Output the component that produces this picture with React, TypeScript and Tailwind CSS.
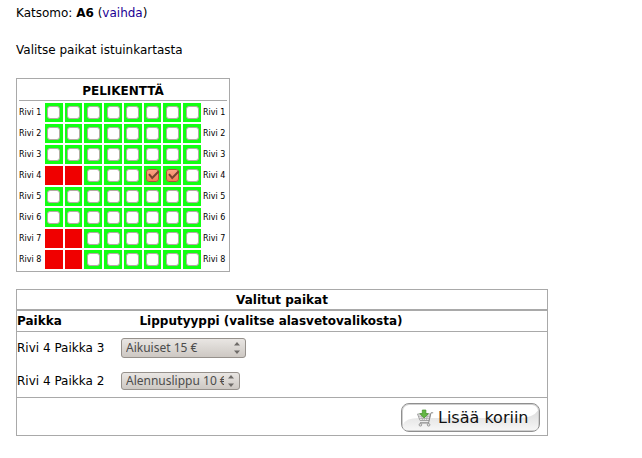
import { useState } from 'react'

type SeatState = 'free' | 'taken' | 'selected'

interface Pick {
  row: number
  seat: number
  ticket: string
  size: string
}

const COLS = [0, 1, 2, 3, 4, 5, 6, 7]

// . = free, x = taken, o = selected
const ROWS = ['........', '........', '........', 'xx...oo.', '........', '........', 'xx......', 'xx......']

const PICKS: Pick[] = [
  { row: 4, seat: 3, ticket: 'Aikuiset 15 €', size: 'w-[125px] h-5' },
  { row: 4, seat: 2, ticket: 'Alennuslippu 10 €', size: 'w-[119px] h-[18px]' },
]

const toState = (c: string): SeatState => (c === 'x' ? 'taken' : c === 'o' ? 'selected' : 'free')

function Seat({ state, label }: { state: SeatState; label: string }) {
  const [checked, setChecked] = useState(state === 'selected')

  if (state === 'taken') {
    return <td className="h-[19px] bg-[#f00000] p-0" />
  }

  return (
    <td className="h-[19px] bg-[#12ff12] p-0">
      <div className="relative mx-auto size-[13px]">
        <input
          type="checkbox"
          aria-label={label}
          checked={checked}
          onChange={(e) => setChecked(e.target.checked)}
          className="block size-[13px] appearance-none rounded-[3px] border border-[#b3aba4] bg-white checked:border-[#a8553a] checked:bg-linear-to-b checked:from-[#f9a284] checked:to-[#f07f58]"
        />
        {checked && (
          <svg viewBox="0 0 14 13" className="pointer-events-none absolute top-0 left-0 h-[13px] w-[14px]" fill="none">
            <path d="M3 5.2 L6.2 9 L12.8 2.2" stroke="#7a4030" strokeWidth="2" />
          </svg>
        )}
      </div>
    </td>
  )
}

function TicketSelect({ pick }: { pick: Pick }) {
  return (
    <div className="relative w-fit">
      <select
        aria-label={`Lipputyyppi, rivi ${pick.row} paikka ${pick.seat}`}
        defaultValue={pick.ticket}
        className={`${pick.size} block appearance-none rounded-[3px] border border-[#96918c] bg-linear-to-b from-[#e9e6e3] to-[#cdc8c3] pr-[15px] pl-1 font-['Noto_Sans',sans-serif] text-xs leading-4 text-[#4c4c4c]`}
      >
        <option>Aikuiset 15 €</option>
        <option>Alennuslippu 10 €</option>
      </select>
      <svg viewBox="0 0 6 12" className="pointer-events-none absolute inset-y-0 right-[6px] my-auto h-3 w-[6px]" fill="#6e6b68">
        <path d="M0 3.5 L3 0 L6 3.5 Z M0 8.5 L3 12 L6 8.5 Z" />
      </svg>
    </div>
  )
}

function CartIcon() {
  return (
    <svg viewBox="0 0 18 18" className="relative size-[18px]" fill="none">
      <path d="M1.5 5 H14.5 L13 11.5 H4 Z" fill="#ececec" stroke="#a3a3a3" />
      <path d="M2.5 7.2 H14 M3.2 9.4 H13.5 M5.5 5.5 L6.5 11.5 M8.3 5.5 V11.5 M11.3 5.5 L10.5 11.5" stroke="#a6a6a6" strokeWidth="0.8" />
      <path d="M12.6 13.8 L15 3.8 H17.2" stroke="#8c8c8c" />
      <path d="M4 13.8 H13" stroke="#8c8c8c" strokeWidth="1.2" />
      <circle cx="4.4" cy="15.8" r="1.3" fill="#ddd" stroke="#888" strokeWidth="0.8" />
      <circle cx="12.6" cy="15.8" r="1.3" fill="#ddd" stroke="#888" strokeWidth="0.8" />
      <path d="M6.3 1 H9.9 V4.6 H12.4 L8.1 9 L3.8 4.6 H6.3 Z" fill="#63b845" stroke="#43912a" strokeWidth="0.7" />
    </svg>
  )
}

export default function App() {
  return (
    <main className="bg-white px-4 pt-[5px] font-['DejaVu_Sans',sans-serif] text-xs text-black">
      <p className="leading-4">
        Katsomo: <b>A6</b> (<a href="#vaihda" className="text-[#1a0094]">vaihda</a>)
      </p>
      <p className="mt-[21px] leading-4">Valitse paikat istuinkartasta</p>

      {/* Seat map */}
      <table className="mt-5 w-[214px] table-fixed border-separate border-spacing-[2px] border border-[#a9a9a9]">
        <colgroup>
          <col className="w-6" />
          {COLS.map((c) => <col key={c} />)}
          <col className="w-6" />
        </colgroup>
        <thead>
          <tr>
            <th colSpan={10} className="h-5 border-b border-[#a9a9a9] p-0 leading-4">PELIKENTTÄ</th>
          </tr>
        </thead>
        <tbody>
          {ROWS.map((row, r) => (
            <tr key={r}>
              <th scope="row" className="p-0 text-left text-[8px] leading-3 font-normal whitespace-nowrap">Rivi {r + 1}</th>
              {COLS.map((c) => (
                <Seat key={c} state={toState(row[c])} label={`Rivi ${r + 1} Paikka ${8 - c}`} />
              ))}
              <td className="p-0 text-left text-[8px] leading-3 whitespace-nowrap">Rivi {r + 1}</td>
            </tr>
          ))}
        </tbody>
      </table>

      {/* Selected seats */}
      <form onSubmit={(e) => e.preventDefault()} className="mt-[17px] max-w-[532px] border border-[#a9a9a9]">
        <table className="w-full table-fixed border-collapse">
          <colgroup>
            <col className="w-[104px]" />
            <col className="w-[300px]" />
            <col />
          </colgroup>
          <thead>
            <tr className="border-b-2 border-[#a9a9a9]">
              <th colSpan={3} className="h-5 p-0 leading-4">Valitut paikat</th>
            </tr>
            <tr className="border-b border-[#a9a9a9]">
              <th className="h-[21px] p-0 text-left leading-4">Paikka</th>
              <th className="p-0 leading-4">Lipputyyppi (valitse alasvetovalikosta)</th>
              <th className="p-0" />
            </tr>
          </thead>
          <tbody>
            {PICKS.map((pick) => (
              <tr key={pick.seat}>
                <td className="h-[33px] p-0 leading-4 whitespace-nowrap">Rivi {pick.row} Paikka {pick.seat}</td>
                <td className="p-0"><TicketSelect pick={pick} /></td>
                <td className="p-0" />
              </tr>
            ))}
          </tbody>
        </table>
        <div className="flex justify-end border-t border-[#a9a9a9] px-[7px] pt-[5px] pb-[3px]">
          <button
            type="submit"
            className="relative flex h-[29px] w-[139px] items-center gap-1 overflow-hidden rounded-lg border border-[#8f8f8f] bg-white pl-[14px] text-base leading-5 whitespace-nowrap text-[#111] inset-ring inset-ring-[#cfcfcf]"
          >
            {/* glossy lower half */}
            <svg viewBox="0 0 137 27" preserveAspectRatio="none" className="absolute inset-px h-[25px] w-[135px]">
              <defs>
                <linearGradient id="gloss" x1="0" y1="0" x2="0" y2="1">
                  <stop offset="0" stopColor="#dcdcdc" />
                  <stop offset="1" stopColor="#f6f6f6" />
                </linearGradient>
              </defs>
              <path d="M0 27 V21 Q3 14 16 14 H118 Q132 14 137 6 V27 Z" fill="url(#gloss)" />
            </svg>
            <CartIcon />
            <span className="relative">Lisää koriin</span>
          </button>
        </div>
      </form>
    </main>
  )
}
